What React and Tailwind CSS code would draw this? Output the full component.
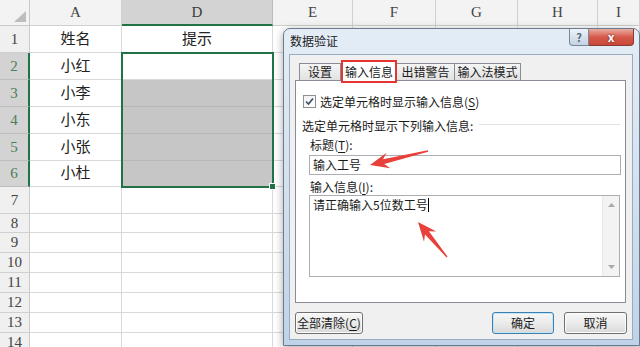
import React from "react";

const COLS = [
  { name: "A", w: "w-[92px]" },
  { name: "D", w: "w-[151px]" },
  { name: "E", w: "w-[80px]" },
  { name: "F", w: "w-[83px]" },
  { name: "G", w: "w-[82px]" },
  { name: "H", w: "w-[80px]" },
  { name: "I", w: "w-[42px]" },
];

const ROWS = [
  { n: 1, h: "h-[27px]", a: "姓名", d: "提示" },
  { n: 2, h: "h-[27px]", a: "小红" },
  { n: 3, h: "h-[27px]", a: "小李" },
  { n: 4, h: "h-[27px]", a: "小东" },
  { n: 5, h: "h-[27px]", a: "小张" },
  { n: 6, h: "h-[26px]", a: "小杜" },
  { n: 7, h: "h-[27px]" },
  { n: 8, h: "h-[19px]" },
  { n: 9, h: "h-[20px]" },
  { n: 10, h: "h-[20px]" },
  { n: 11, h: "h-[20px]" },
  { n: 12, h: "h-[20px]" },
  { n: 13, h: "h-[20px]" },
  { n: 14, h: "h-[20px]" },
];

// tapered annotation arrow, tail -> tip
const arrowPoints = (x1, y1, x2, y2, head = 17, half = 8, shaft = 5) => {
  const len = Math.hypot(x2 - x1, y2 - y1);
  const ux = (x2 - x1) / len;
  const uy = (y2 - y1) / len;
  const nx = -uy;
  const ny = ux;
  const bx = x2 - ux * head;
  const by = y2 - uy * head;
  const p = (x, y) => `${x.toFixed(1)},${y.toFixed(1)}`;
  return [
    p(x2, y2),
    p(bx + nx * half - ux * 2, by + ny * half - uy * 2),
    p(bx + (nx * shaft) / 2 + ux * 3, by + (ny * shaft) / 2 + uy * 3),
    p(x1 + nx * 0.7, y1 + ny * 0.7),
    p(x1 - nx * 0.7, y1 - ny * 0.7),
    p(bx - (nx * shaft) / 2 + ux * 3, by - (ny * shaft) / 2 + uy * 3),
    p(bx - nx * half - ux * 2, by - ny * half - uy * 2),
  ].join(" ");
};

const Acc = ({ children }) => <span className="underline underline-offset-2">{children}</span>;

const Sheet = () => (
  <div className="flex flex-col font-['Liberation_Serif','Noto_Sans_CJK_SC',serif] text-[15px] text-[#222]">
    {/* column headers */}
    <div className="flex h-[26px] bg-[#f3f3f3]">
      <div className="relative w-[30px] border-r border-b border-[#c9c9c9]">
        <div className="absolute right-[3px] bottom-[3px] w-0 h-0 border-l-[12px] border-l-transparent border-b-[11px] border-b-[#bdbdbd]" />
      </div>
      {COLS.map((c) => (
        <div
          key={c.name}
          className={`${c.w} flex items-center justify-center border-r ${
            c.name === "D"
              ? "bg-[#d3d3d3] border-b-2 border-b-[#217346] border-r-[#bdbdbd] text-[#3d3d3d]"
              : "border-b border-[#d0d0d0] text-[#444]"
          }`}
        >
          {c.name}
        </div>
      ))}
    </div>

    {ROWS.map((r) => {
      const sel = r.n >= 2 && r.n <= 6;
      return (
        <div key={r.n} className={`flex ${r.h} overflow-hidden`}>
          <div
            className={`w-[30px] flex items-center justify-center border-b ${
              sel
                ? "bg-[#d3d3d3] text-[#4b7d5c] border-b-[#bdbdbd] border-r-2 border-r-[#217346]"
                : "bg-[#f0f0f0] text-[#444] border-b-[#d0d0d0] border-r border-r-[#c9c9c9]"
            }`}
          >
            {r.n}
          </div>
          <div className="w-[92px] flex items-center justify-center border-r border-b border-[#d9d9d9]">
            {r.a}
          </div>
          <div
            className={`w-[151px] flex items-center justify-center border-r border-b ${
              r.n >= 3 && r.n <= 6 ? "bg-[#c6c6c6] border-[#b8b8b8]" : "border-[#d9d9d9]"
            }`}
          >
            {r.d}
          </div>
          {COLS.slice(2).map((c) => (
            <div key={c.name} className={`${c.w} border-r border-b border-[#d9d9d9]`} />
          ))}
        </div>
      );
    })}

    {/* selection D2:D6 */}
    <div className="absolute left-[121px] top-[52px] w-[153px] h-[136px] border-2 border-[#217346]" />
    <div className="absolute left-[269px] top-[183px] w-[7px] h-[7px] bg-[#217346] border border-white" />
  </div>
);

const Button = ({ children, w, primary }) => (
  <div
    className={`${w} h-[22px] flex items-center justify-center rounded-[3px] border text-[12px] text-[#1a1a1a] bg-gradient-to-b from-[#f7f7f7] via-[#ebebeb] to-[#d9d9d9] ${
      primary ? "border-[#3c7fb1] shadow-[inset_0_0_0_1px_#c4e5f6]" : "border-[#707070] shadow-[inset_0_0_0_1px_#fcfcfc]"
    }`}
  >
    {children}
  </div>
);

const Dialog = () => (
  <div className="absolute left-[283px] top-[28px] w-[357px] h-[318px] flex flex-col rounded-t-[7px] border border-[#6b7a8c] bg-gradient-to-b from-[#e4edf6] via-[#d3e1ef] to-[#bfd3e8] font-['Noto_Sans_CJK_SC',sans-serif] text-[12px] leading-[16px] text-[#1a1a1a] shadow-[0_2px_8px_rgba(0,0,0,0.35)]">
    {/* title bar */}
    <div className="h-[25px] flex justify-between pl-[6px]">
      <span className="mt-[4px] text-[#222]">数据验证</span>
      <div className="flex mr-[5px] h-[17px]">
        <div className="w-[20px] flex items-center justify-center rounded-bl-[4px] border border-t-0 border-[#7a8797] bg-gradient-to-b from-[#eef3f9] to-[#c3d2e2] text-[11px] font-bold text-[#55667a]">
          ?
        </div>
        <div className="w-[45px] flex items-center justify-center rounded-br-[4px] border border-t-0 border-l-0 border-[#8a3a33] bg-gradient-to-b from-[#e9aca2] via-[#d6594b] to-[#c8473a] text-[12px] font-bold text-white [text-shadow:0_0_2px_#5a1a14]">
          x
        </div>
      </div>
    </div>

    {/* client area */}
    <div className="ml-[5px] mr-[6px] mb-[5px] flex-1 flex flex-col border border-[#9aabbf] bg-[#f0f0f0] pt-[5px] pl-[5px] pr-[6px]">
      {/* tabs */}
      <div className="h-[20px] flex items-end pl-[4px]">
        <div className="w-[42px] h-[17px] flex items-center justify-center border border-b-0 border-[#898c95] bg-gradient-to-b from-[#f5f5f5] to-[#e2e2e2]">
          设置
        </div>
        <div className="relative z-10 w-[56px] h-[23px] -mb-[3px] flex items-start justify-center pt-[2px] border-2 border-[#e53530] bg-white">
          输入信息
        </div>
        <div className="w-[58px] h-[17px] flex items-center justify-center border border-b-0 border-l-0 border-[#898c95] bg-gradient-to-b from-[#f5f5f5] to-[#e2e2e2]">
          出错警告
        </div>
        <div className="w-[66px] h-[17px] flex items-center justify-center border border-b-0 border-l-0 border-[#898c95] bg-gradient-to-b from-[#f5f5f5] to-[#e2e2e2]">
          输入法模式
        </div>
      </div>

      {/* tab panel */}
      <div className="h-[223px] flex flex-col border border-[#898c95] bg-white">
        <div className="mt-[14px] ml-[7px] h-[13px] flex items-center">
          <div className="w-[13px] h-[13px] flex items-center justify-center border border-[#8f8f8f] bg-gradient-to-br from-[#f0f0f0] to-white">
            <svg width="9" height="9" viewBox="0 0 9 9">
              <path d="M1 4.5 L3.5 7 L8 1.5" fill="none" stroke="#3a4a6a" strokeWidth="1.6" />
            </svg>
          </div>
          <span className="ml-[4px]">
            选定单元格时显示输入信息(<Acc>S</Acc>)
          </span>
        </div>

        <div className="mt-[10px] ml-[6px] mr-[5px] h-[16px] flex items-center gap-[6px]">
          <span>选定单元格时显示下列输入信息:</span>
          <div className="flex-1 h-px bg-[#dde3e8] -mt-[3px]" />
        </div>

        <div className="mt-[3px] ml-[14px] h-[16px]">
          标题(<Acc>T</Acc>):
        </div>
        <div className="mt-[2px] ml-[13px] mr-[4px] h-[20px] flex items-center pl-[3px] border border-[#abadb3]">
          输入工号
        </div>

        <div className="mt-[4px] ml-[14px] h-[16px]">
          输入信息(<Acc>I</Acc>):
        </div>
        <div className="ml-[13px] mr-[5px] h-[82px] flex border border-[#abadb3]">
          <div className="flex-1 pl-[3px] pt-[1px] flex items-start">
            <span>请正确输入5位数工号</span>
            <span className="mt-[1px] w-px h-[14px] bg-black" />
          </div>
          <div className="w-[17px] flex flex-col justify-between items-center py-[7px] bg-[#f3f3f3] border-l border-[#e8e8e8]">
            <svg width="7" height="4" viewBox="0 0 7 4">
              <path d="M0 4 L3.5 0 L7 4 Z" fill="#a8a8a8" />
            </svg>
            <svg width="7" height="4" viewBox="0 0 7 4">
              <path d="M0 0 L3.5 4 L7 0 Z" fill="#a8a8a8" />
            </svg>
          </div>
        </div>
      </div>

      {/* buttons */}
      <div className="mt-[9px] flex justify-between pr-[-1px]">
        <Button w="w-[68px]">
          全部清除(<Acc>C</Acc>)
        </Button>
        <div className="flex gap-[10px] -mr-px">
          <Button w="w-[62px]" primary>
            确定
          </Button>
          <Button w="w-[63px]">取消</Button>
        </div>
      </div>
    </div>
  </div>
);

const Arrows = () => (
  <svg className="absolute inset-0 pointer-events-none" width="640" height="347" viewBox="0 0 640 347">
    <polygon points={arrowPoints(428, 151, 370, 165)} fill="#e8403a" />
    <polygon points={arrowPoints(447, 257, 418, 222)} fill="#e8403a" />
  </svg>
);

const App = () => (
  <div className="relative w-[640px] h-[347px] overflow-hidden bg-white">
    <Sheet />
    <Dialog />
    <Arrows />
  </div>
);

export default App;
